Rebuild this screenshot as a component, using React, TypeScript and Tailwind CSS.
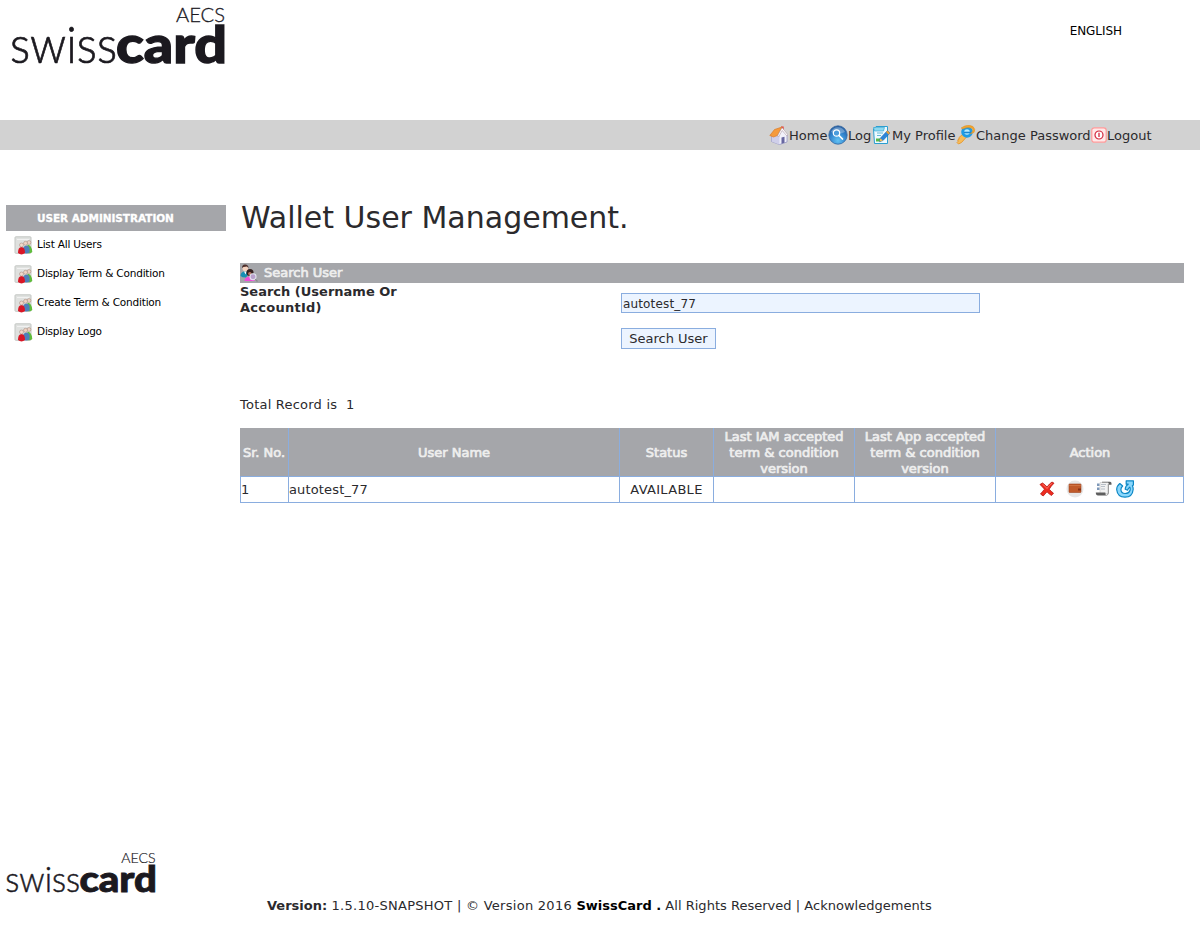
import React from "react";

function Logo({ className }: { className: string }) {
  return (
    <svg className={"overflow-visible " + className} viewBox="0 0 216 62" fill="#1b191f" stroke="#1b191f" fontFamily="Lato, sans-serif">
      <text x="165" y="16" fontSize="19.500" fontWeight="300" strokeWidth=".3" textLength="49" lengthAdjust="spacingAndGlyphs">AECS</text>
      <text x="-1" y="57" fontSize="51" fontWeight="300" strokeWidth=".7" textLength="107" lengthAdjust="spacingAndGlyphs">swiss</text>
      <text x="105" y="57" fontSize="51" fontWeight="900" strokeWidth="1.300" textLength="111" lengthAdjust="spacingAndGlyphs">card</text>
    </svg>
  );
}

function HomeIcon() {
  return (
    <svg className="size-5 shrink-0" viewBox="0 0 20 20">
      <path d="M12 1.500h2.600v5H12z" fill="#e8352b" />
      <path d="M2.500 9.500L13 4.500l5 5.500v7l-7.500 2.500-8-3z" fill="#f1f1fa" stroke="#8c8cc0" strokeWidth=".7" />
      <path d="M2.800 10v6.500l7.700 3V10z" fill="#cfcfea" />
      <path d="M12.500 12.500l3-.8v6l-3 1z" fill="#6767a0" />
      <path d="M.8 10.500L5.500 4.500 13 2 8.500 10.500l-4 1.500z" fill="#f59a3c" stroke="#d9731e" strokeWidth=".6" />
      <path d="M8.500 11L13 2.500 19 10l-1 1-4.800-5.500L9.500 12z" fill="#fff" stroke="#a08a98" strokeWidth=".5" />
    </svg>
  );
}

function LogIcon() {
  return (
    <svg className="size-5 shrink-0" viewBox="0 0 20 20">
      <defs>
        <radialGradient id="logBall" cx=".5" cy=".8" r=".8">
          <stop offset="0" stopColor="#62c2f4" />
          <stop offset=".6" stopColor="#2f7fc9" />
          <stop offset="1" stopColor="#245a9c" />
        </radialGradient>
      </defs>
      <circle cx="10" cy="10" r="9.200" fill="url(#logBall)" stroke="#3868a0" strokeWidth=".8" />
      <path d="M3 7a7.500 7.500 0 0 1 14 0q-7 3-14 0" fill="#fff" opacity=".3" />
      <circle cx="8.500" cy="8" r="3.200" fill="#4b9cdc" stroke="#fff" strokeWidth="1.200" />
      <path d="M11 10.500l3.500 3.500" stroke="#fff" strokeWidth="1.700" strokeLinecap="round" />
    </svg>
  );
}

function ProfileIcon() {
  return (
    <svg className="size-5 shrink-0" viewBox="0 0 20 20">
      <path d="M1.500 4l2.500-2.500h11.500v17H2.500z" fill="#eefaff" stroke="#2b9fd0" strokeWidth="1" />
      <path d="M1.500 2.500h11l-1 3.500h-9z" fill="#8ed9ef" stroke="#2b9fd0" strokeWidth=".6" />
      <path d="M5 8h6M5 10.500h4" stroke="#62b8d8" />
      <path d="M4 13.500h5v3H4z" fill="#58b947" />
      <path d="M15.500 5.500L18 8l-7 7.500-3.500 1.200.8-3.500z" fill="#2d86d9" stroke="#1765b0" strokeWidth=".6" />
      <path d="M8.300 13.200l2.700 2.300-3.500 1.200z" fill="#f5bd55" />
      <path d="M15.500 5.500L18 8l-1.500 1.500L14 7z" fill="#f0a030" />
    </svg>
  );
}

function KeyIcon() {
  return (
    <svg className="size-5 shrink-0" viewBox="0 0 20 20">
      <path d="M7 9l3.500 3-5 5.500-3 1.500-1.500-1.500 1.500-1.500-1-1 2-1-1-1z" fill="#f8bc58" stroke="#e29024" strokeWidth=".8" />
      <circle cx="11" cy="7" r="4.300" fill="#b9ecff" stroke="#1d9ce6" strokeWidth="3" />
      <path d="M8 7.500h7" stroke="#1685d2" strokeWidth="1.600" />
      <path d="M5 3q6-4.500 12-1.500 3 3 1 6l-4 1.500q4-3 2.500-5.500Q12 1.500 7 4z" fill="#f3a42c" stroke="#d98818" strokeWidth=".4" />
    </svg>
  );
}

function LogoutIcon() {
  return (
    <svg className="size-4 shrink-0" viewBox="0 0 16 16">
      <rect x=".8" y=".8" width="14.400" height="14.400" rx="2.500" fill="#ffe9e9" stroke="#ff9a9a" strokeWidth="1.200" />
      <circle cx="8" cy="8" r="4" fill="#fff" stroke="#d3253b" strokeWidth="1.200" />
      <path d="M8 5.800v4.200" stroke="#d3253b" strokeWidth="1.300" />
    </svg>
  );
}

function UsersIcon() {
  return (
    <svg className="size-[19px] shrink-0" viewBox="0 0 19 19">
      <rect x="1" y=".8" width="16" height="16.500" rx=".8" fill="#dfe1df" stroke="#c3c6c3" />
      <path d="M3 3h12v1H3z" fill="#f1f1f1" />
      <path d="M13.500 8.500q4.300 .5 4.800 7.500-2 2-5.300 1z" fill="#5fbd3c" />
      <circle cx="15" cy="6.500" r="1.900" fill="#ecd2c4" stroke="#a08478" strokeWidth=".5" />
      <path d="M8.500 16.500q0-7 4-7t3 7q-3 1.800-7 0z" fill="#4f80ba" />
      <circle cx="11.500" cy="7.300" r="2" fill="#efd2c2" stroke="#a08478" strokeWidth=".5" />
      <path d="M4 17q0-6 3.500-6T11 17q-3.500 2.800-7 0z" fill="#d91626" />
      <circle cx="7.500" cy="9" r="2" fill="#f2dacc" stroke="#a08478" strokeWidth=".5" />
    </svg>
  );
}

function SearchUserIcon() {
  return (
    <svg className="size-[18px] shrink-0" viewBox="0 0 18 18">
      <path d="M.5 12q0-4.500 4.500-4.500 3 0 4 2l-3 4q-4 0-5.500-1.500z" fill="#168fb4" />
      <path d="M4 7.500h2.500l-.8 3z" fill="#fff" />
      <circle cx="5.300" cy="4.500" r="2.800" fill="#f6d3bf" />
      <path d="M2 4q0-3.500 3-3.500Q8.500.5 8.500 4L7 2.500 3.500 3z" fill="#4c2d29" />
      <path d="M4.500 17q0-4.500 6-4.500 3 0 4 1.500v3z" fill="#ef4bdb" />
      <circle cx="10" cy="8.500" r="3.500" fill="#35211f" />
      <circle cx="9.800" cy="9.600" r="1.700" fill="#bd7765" />
      <circle cx="13" cy="12.700" r="3" fill="#b9a0cc" stroke="#e3e6ed" strokeWidth="1.100" />
      <path d="M15.200 15.200L17.500 17.500" stroke="#888" strokeWidth="1.200" />
    </svg>
  );
}

function DeleteIcon() {
  return (
    <svg className="h-4 w-4" viewBox="0 0 16 16">
      <path d="M1 3.500L3.500 2Q6 3.500 8 6q2.500-3.500 5-5l2 1.200Q12 5 10.200 8.200q2 2.300 4.300 4L12.500 14.500Q10 13 8 10.800 6 13 4.200 15L1.500 13Q3.500 10.500 5.500 8.200 3.500 6 1 3.500z" fill="#ee2c20" stroke="#b51712" strokeWidth=".8" />
      <path d="M3.500 3.300Q6 5 8 7.500 10.500 4 13 2.300" fill="none" stroke="#ff8274" strokeWidth=".8" />
    </svg>
  );
}

function WalletIcon() {
  return (
    <svg className="h-[18px] w-[18px]" viewBox="0 0 18 18">
      <circle cx="9" cy="9" r="8.500" fill="#e7e7e7" />
      <rect x="3" y="4" width="12" height="8.500" rx=".6" fill="#c05a2a" stroke="#a0451f" strokeWidth=".6" />
      <path d="M3.200 5.500h11.600" stroke="#d67c4c" strokeWidth=".7" />
      <path d="M12 8.500h3v2h-3z" fill="#853015" />
    </svg>
  );
}

function ScrollIcon() {
  return (
    <svg className="h-4 w-[17px]" viewBox="0 0 17 16">
      <path d="M5 1.500h8.500v11H5z" fill="#f2f2f2" stroke="#bbb" strokeWidth=".5" />
      <path d="M7 .8h8q1.800 0 1.500 3H14q0-2-1-2.300H7z" fill="#5e5e5e" />
      <path d="M.8 11.500h9.500q0 2.500 1.500 3H3q-2.200 0-2.200-3z" fill="#5e5e5e" />
      <path d="M2 2.500h2.500V5H2zM2 6.500h2.500V9H2z" fill="#7d97b8" />
      <path d="M6 3.500h5M6 5.500h4M6 8h4" stroke="#a9b2bd" strokeWidth=".8" />
      <path d="M13.300 3v9q0 2-2 2.300" fill="none" stroke="#858585" strokeWidth=".9" />
    </svg>
  );
}

function RefreshIcon() {
  return (
    <svg className="h-[18px] w-[18px]" viewBox="0 0 18 18">
      <path d="M3.800 3.500Q.6 6 .7 9.800 1.500 17.200 9 17.200t8.200-8q0-2-.8-3.400l1-.8V.8h-7.200v3.400h2q-2.800 1.600-3 5l2.500 1q.3-2 2-3 .8 1.200.4 2.800-.9 3.500-5 3.500-4-.2-4.200-3.800 0-2.300 1.800-3.700z" fill="#8ad7fc" stroke="#0c87c5" strokeWidth="1.200" strokeLinejoin="round" />
    </svg>
  );
}

const nav = [
  { label: "Home", icon: <HomeIcon />, box: "w-[59px]" },
  { label: "Log", icon: <LogIcon />, box: "w-[44px]" },
  { label: "My Profile", icon: <ProfileIcon />, box: "w-[84px]" },
  { label: "Change Password", icon: <KeyIcon />, box: "w-[135px]" },
  { label: "Logout", icon: <LogoutIcon />, box: "w-[62px]" },
];

const menu = ["List All Users", "Display Term & Condition", "Create Term & Condition", "Display Logo"];

const columns = "grid grid-cols-[48px_331px_94px_141px_141px_189px]";
const cell = "flex items-center justify-center border-l border-[#8aaddf]";
const strong = "text-[#eeeeee] [-webkit-text-stroke:0.7px_#eeeeee]";

export default function App() {
  return (
    <div className="flex h-[943px] w-[1200px] flex-col overflow-hidden bg-white font-['DejaVu_Sans',sans-serif] text-[13px] leading-4 text-[#2b2a2d]">
      <header className="flex h-[120px] items-start justify-between pl-[11px] pr-[78px] pt-[6px]">
        <Logo className="h-[62px] w-[216px]" />
        <span className="mt-[17px] text-xs tracking-[-0.05px] text-black">ENGLISH</span>
      </header>

      <nav className="flex h-[30px] items-center bg-[#d2d2d2] pl-[769px]">
        {nav.map((n) => (
          <a key={n.label} className={"flex shrink-0 items-center whitespace-nowrap " + n.box}>
            {n.icon}
            <span className="pt-[2px]">{n.label}</span>
          </a>
        ))}
      </nav>

      <div className="flex h-[700px] pl-[6px] pt-[55px]">
        <aside className="w-[220px]">
          <h2 className="flex h-[26px] items-center bg-[#a5a6aa] pl-[31px] text-[10.500px] font-bold tracking-[-0.05px] text-white [-webkit-text-stroke:0.3px_white]">USER ADMINISTRATION</h2>
          <ul>
            {menu.map((m) => (
              <li key={m} className="flex h-[29px] items-center gap-[4px] pl-2 text-[10.500px] tracking-[-0.2px] text-black">
                <UsersIcon />
                <span className="-mt-[3px]">{m}</span>
              </li>
            ))}
          </ul>
        </aside>

        <main className="ml-[14px] w-[944px]">
          <h1 className="-mt-[4px] h-[62px] pl-px text-[30px] leading-[34px]">Wallet User Management.</h1>
          <div className="flex h-5 items-center gap-[6px] bg-[#a5a6aa]">
            <SearchUserIcon />
            <span className={strong}>Search User</span>
          </div>
          <form className="flex h-[114px]">
            <label className="w-[381px] pr-[200px] pt-px font-bold">Search (Username Or<br /><span className="tracking-[0.25px]">AccountId)</span></label>
            <div className="pt-[10px]">
              <input className="block h-5 w-[359px] border border-[#8aaddf] bg-[#ecf4ff] px-px pt-px text-[12px] tracking-[0.15px]" defaultValue="autotest_77" />
              <button type="button" className="mt-[15px] h-[21px] w-[95px] border border-[#8aaddf] bg-[#ecf4ff]">Search User</button>
            </div>
          </form>
          <p className="h-[31px] whitespace-pre tracking-[0.22px]">Total Record is  1</p>
          <div className={columns + " h-12 bg-[#a5a6aa] text-center " + strong}>
            <div className="flex items-center justify-center whitespace-nowrap pt-px">Sr. No.</div>
            <div className={cell + " pt-px"}>User Name</div>
            <div className={cell + " pt-px"}>Status</div>
            <div className={cell + " pt-px"}>Last IAM accepted<br />term &amp; condition<br />version</div>
            <div className={cell + " pt-px"}>Last App accepted<br />term &amp; condition<br />version</div>
            <div className={cell + " pt-px"}>Action</div>
          </div>
          <div className={columns + " h-[27px] border-y border-r border-[#8aaddf]"}>
            <div className="flex items-center border-l border-[#8aaddf]">1</div>
            <div className="flex items-center border-l border-[#8aaddf] tracking-[0.15px]">autotest_77</div>
            <div className={cell + " tracking-[0.3px]"}>AVAILABLE</div>
            <div className={cell} />
            <div className={cell} />
            <div className="flex items-center border-l border-[#8aaddf] pb-px pl-[43px]">
              <DeleteIcon />
              <span className="ml-[11px]"><WalletIcon /></span>
              <span className="ml-[11px]"><ScrollIcon /></span>
              <span className="ml-[4px]"><RefreshIcon /></span>
            </div>
          </div>
        </main>
      </div>

      <footer className="flex flex-1 items-start pl-[6px] pt-[2px]">
        <Logo className="h-[43.500px] w-[151px] shrink-0" />
        <p className="ml-[110px] mt-[46px] whitespace-nowrap">
          <b>Version:</b>
          <span className="tracking-[0.27px]"> 1.5.10-SNAPSHOT | © Version 2016 </span>
          <b className="text-black">SwissCard .</b>
          <span className="tracking-[0.02px]"> All Rights Reserved | Acknowledgements</span>
        </p>
      </footer>
    </div>
  );
}
